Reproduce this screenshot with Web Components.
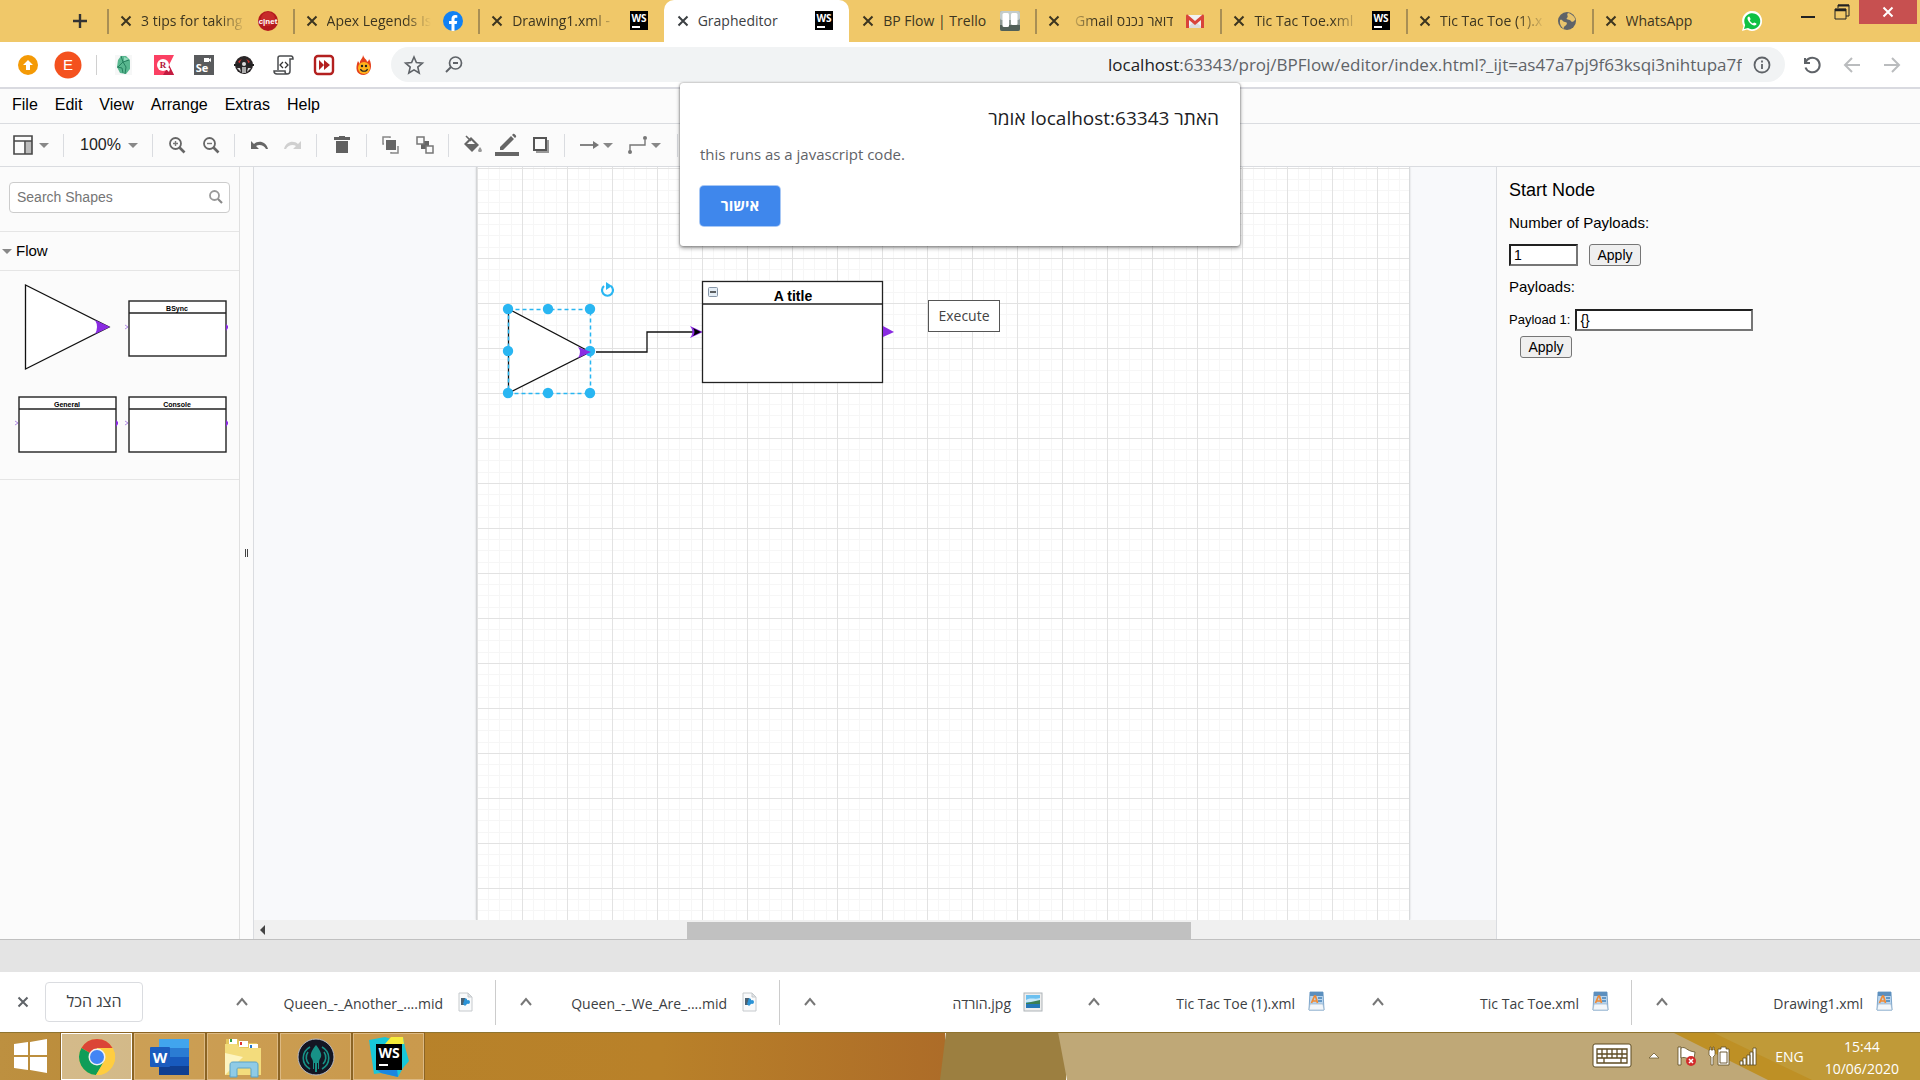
<!DOCTYPE html>
<html lang="en">
<head>
<meta charset="utf-8">
<title>Grapheditor</title>
<style>
  html, body { margin: 0; height: 100%; }
  body { overflow: hidden; font-family: "Open Sans", "Liberation Sans", sans-serif; }
</style>
</head>
<body>
<desk-top></desk-top>
<script>
const ARIAL = '"Liberation Sans", Arial, sans-serif';
const SEGOE = '"Open Sans", "Noto Sans", "Liberation Sans", sans-serif';

function element(name, css, html) {
  const template = document.createElement('template');
  customElements.define(name, class extends HTMLElement {
    constructor() {
      super();
      this.attachShadow({ mode: 'open' });
    }
    connectedCallback() {
      if (this.shadowRoot.childNodes.length) return;
      template.innerHTML = '<style>*{box-sizing:border-box}button,input{font:inherit;color:inherit}' + css + '</style>' + (typeof html === 'function' ? html(this) : html);
      this.shadowRoot.append(template.content.cloneNode(true));
    }
  });
}

/* ---------- icons: [viewBox size, markup] ---------- */
const ICONS = {
  close: [14, '<path d="M2.5 2.5l9 9M11.5 2.5l-9 9" stroke="currentColor" stroke-width="2" fill="none"/>'],
  plus: [16, '<path d="M8 1v14M1 8h14" stroke="currentColor" stroke-width="2.4"/>'],
  cnet: [20, '<circle cx="10" cy="10" r="10" fill="#b4191d"/><circle cx="10" cy="8" r="7" fill="#c72a2a"/><text x="10" y="13" font-family="Liberation Sans" font-weight="700" font-size="8" fill="#fff" text-anchor="middle">c|net</text>'],
  facebook: [20, '<circle cx="10" cy="10" r="10" fill="#1181f4"/><path d="M8.5 20v-7H6v-3h2.5V7.8C8.5 5.3 10 4 12.2 4l2.1.2v2.5h-1.2c-1.2 0-1.6.7-1.6 1.5V10h2.7l-.5 3h-2.2v7z" fill="#fff"/>'],
  ws: [20, '<rect x="1" width="18" height="19" fill="#000"/><text x="10" y="11" font-family="Open Sans" font-weight="700" font-size="10" fill="#fff" text-anchor="middle">WS</text><rect x="3" y="15" width="8" height="2" fill="#fff"/>'],
  trello: [20, '<rect width="20" height="20" rx="2" fill="#8f9a95"/><rect width="20" height="9" rx="2" fill="#c3cccb"/><path d="M0 14h20v4a2 2 0 0 1-2 2H2a2 2 0 0 1-2-2z" fill="#526058"/><rect x="2.5" y="2" width="6.5" height="14" rx="1.5" fill="#fff"/><rect x="11" y="2" width="6.5" height="12" rx="1.5" fill="#fff"/>'],
  gmail: [20, '<path d="M2 4h16v13H2z" fill="#f1f1f1"/><path d="M2 17l8-7 8 7z" fill="#dcdcdc"/><path d="M1 17V5c0-1 1-2 2-1l7 6 7-6c1-1 2 0 2 1v12h-3V9l-6 5-6-5v8z" fill="#d9443a"/>'],
  globe: [20, '<circle cx="10" cy="10" r="9" fill="#5f6368"/><path d="M3 9c3-1 2 2 5 2s2 3 0 4-1 3-1 3-5-3-4-9zM11 2c-2 2 1 3-1 5s3 1 4 3 3 0 4-1-2-6-7-7z" fill="#e9c46d"/>'],
  whatsapp: [20, '<path d="M0 20l1.5-5A10 10 0 1 1 5 18.5z" fill="#fff"/><path d="M2 18l1.2-4A8 8 0 1 1 6 17z" fill="#0fc143"/><path d="M7 5.5c-1 0-1.6 1-1.5 2 .3 3 4 6.8 7 7 1 0 2-.6 2-1.7 0-.4-2-1.5-2.4-1.4-.4 0-.8 1-1.2 1-.8-.1-3-2.2-3.1-3 0-.4.8-.8.8-1.2S7.5 5.5 7 5.5z" fill="#fff"/>'],
  up: [20, '<circle cx="10" cy="10" r="10" fill="#f49a06"/><path d="M10 5l5 5h-3v5H8v-5H5z" fill="#fff"/>'],
  avatar: [28, '<circle cx="14" cy="14" r="13.5" fill="#f4511e"/><text x="14" y="19" font-family="Liberation Sans" font-size="15" fill="#fff" text-anchor="middle">E</text>'],
  gem: [20, '<rect x="1" width="17" height="20" fill="#f6f7f7"/><path d="M7 1h5l4 4v9l-4 5-6-1-3-6 1-7z" fill="#58b78f"/><path d="M7 1l2 6 6-2M9 7l-5 5M9 7l3 5-1 7M3 12l5 1 1 5" fill="none" stroke="#25805f"/><path d="M10 2l5 2-5 2z" fill="#93d9bd"/>'],
  rival: [20, '<path d="M0 0h20l-5 10 5 10H0z" fill="#fb4063"/><path d="M9 20l6-10 5 10z" fill="#c21c41"/><circle cx="9" cy="10" r="6" fill="#fff"/><path d="M11 13l4 4 1-3-3-3z" fill="#fff"/><text x="9" y="13" font-family="Liberation Serif" font-weight="700" font-size="9" fill="#b11238" text-anchor="middle">R</text>'],
  selenium: [20, '<rect width="20" height="20" fill="#595b5d"/><rect x="10" y="3" width="5" height="4" fill="#fff"/><path d="M14 5l3-2v4z" fill="#fff"/><text x="8" y="17" font-family="Open Sans" font-weight="700" font-size="11" fill="#fff" text-anchor="middle">Se</text>'],
  mask: [20, '<circle cx="10" cy="10" r="9" fill="#2a2628"/><path d="M4 7a7 6 0 0 1 12 0l-2 1a4 4 0 0 0-8 0z" fill="#d5312f"/><circle cx="10" cy="9" r="2" fill="#ddd"/><path d="M0 9h7v2H0zM13 9h7v2h-7z" fill="#222"/><path d="M3 13h3l1 4zM14 13h3l-4 4z" fill="#ddd"/><path d="M8 12h4v6H8z" fill="#aaa"/>'],
  scroll: [20, '<path d="M4 15V3c0-1 1-2 2-2h11c1 0 2 1 2 3h-3v12c0 2-1 3-3 3H3c-2 0-3-1-3-3h11c0 2 1 3 2 3" fill="none" stroke="#4a4c4f" stroke-width="1.5"/><path d="M9 7l-3 3 3 3M11 7l3 3-3 3" fill="none" stroke="#333" stroke-width="1.3"/>'],
  forward: [20, '<rect x="1" y="1" width="18" height="18" rx="3" fill="#fff" stroke="#b3201f" stroke-width="2.4"/><path d="M5 5l5 5-5 5zM10 5l6 5-6 5z" fill="#b3201f"/>'],
  fire: [20, '<path d="M9 0c1 4 4 4 4 7 2-1 2-3 2-3 4 6 2 15-5 16C2 20 1 13 4 6c1 2 2 3 2 3-1-4 3-5 3-9z" fill="#e5401c"/><ellipse cx="10" cy="13" rx="6" ry="6" fill="#ffb21c"/><circle cx="8" cy="11" r="1.2" fill="#222"/><circle cx="12" cy="11" r="1.2" fill="#222"/><path d="M6.5 14c1 3 6 3 7 0" fill="none" stroke="#222" stroke-width="1.2"/>'],
  star: [20, '<path d="M10 2l2.4 5.6 6 .5-4.600 4 1.400 5.900L10 14.900 4.800 18l1.400-5.900-4.600-4 6-.5z" fill="none" stroke="#5f6368" stroke-width="1.6"/>'],
  lens: [20, '<circle cx="11.5" cy="8" r="6" fill="none" stroke="#5f6368" stroke-width="1.7"/><path d="M7 12l-5 5M9 8h5" stroke="#5f6368" stroke-width="1.9"/>'],
  info: [18, '<circle cx="9" cy="9" r="7.5" fill="none" stroke="#5f6368" stroke-width="1.8"/><path d="M9 8v5M9 4.5v2" stroke="#5f6368" stroke-width="1.8"/>'],
  reload: [20, '<path d="M3 3v5h5" fill="none" stroke="#5f6368" stroke-width="2"/><path d="M3.5 7.5a7.3 7.3 0 1 1 0 5" fill="none" stroke="#5f6368" stroke-width="2"/>'],
  back: [18, '<path d="M17 9H2M9 2L2 9l7 7" fill="none" stroke="#babcbe" stroke-width="2"/>'],
  ahead: [18, '<path d="M1 9h15M9 2l7 7-7 7" fill="none" stroke="#babcbe" stroke-width="2"/>'],
  minimize: [16, '<path d="M1 13h14" stroke="#222" stroke-width="2"/>'],
  restore: [16, '<path d="M4 4V1h11v11h-3" fill="none" stroke="#222"/><path d="M4 1.5h11" stroke="#222" stroke-width="2"/><path d="M1 5h11v10H1z" fill="none" stroke="#222"/><path d="M1 6h11" stroke="#222" stroke-width="2.5"/>'],
  layout: [20, '<path d="M13 6h6v13h-6z" fill="#bbb"/><path d="M1 1h18v18H1zM1 6h18M12 6v13" fill="none" stroke="#484848" stroke-width="1.6"/>'],
  caret: [10, '<path d="M0 3h10L5 8z" fill="#888"/>'],
  zoomin: [18, '<circle cx="7.5" cy="7.5" r="5.5" fill="none" stroke="#666" stroke-width="1.8"/><path d="M11.5 11.5l5 5" stroke="#666" stroke-width="2.6"/><path d="M5 7.5h5M7.5 5v5" stroke="#777" stroke-width="1.4"/>'],
  zoomout: [18, '<circle cx="7.5" cy="7.5" r="5.5" fill="none" stroke="#666" stroke-width="1.8"/><path d="M11.5 11.5l5 5" stroke="#666" stroke-width="2.6"/><path d="M5 7.5h5" stroke="#777" stroke-width="1.4"/>'],
  undo: [18, '<path d="M1 5v8h8L6 10c3-2 8-1 10 3h2C16 5 8 4 4 8z" fill="#666"/>'],
  redo: [18, '<path d="M17 5v8H9l3-3c-3-2-8-1-10 3H0C2 5 10 4 14 8z" fill="#d0d0d0"/>'],
  trash: [20, '<path d="M7 1h6v1h5v3H2V2h5zM4 6h12v12H4z" fill="#606060"/>'],
  front: [20, '<rect x="5" y="5" width="10" height="10" fill="#666"/><path d="M3 9H2V2h7v1M17 11v7h-7v-1" fill="none" stroke="#888" stroke-width="1.5"/>'],
  behind: [20, '<rect x="6" y="6" width="8" height="8" fill="#666"/><rect x="2" y="2" width="7" height="7" fill="#fbfbfb" stroke="#777" stroke-width="1.5"/><rect x="11" y="11" width="7" height="7" fill="#fbfbfb" stroke="#777" stroke-width="1.5"/>'],
  fill: [20, '<path d="M1 9l7-7 8 8-7 7z" fill="#666"/><path d="M4 9h8L8 5z" fill="#fbfbfb"/><path d="M3 1l5 5" stroke="#666" stroke-width="1.6"/><path d="M17 12c3 4 2 5 0 5s-3-1 0-5z" fill="#999"/>'],
  pen: [24, '<path d="M5 14L16 3l3 3L8 17H5zM17 2l1-1c1-1 4 2 3 3l-1 1z" fill="#666"/><path d="M0 21h24" stroke="#666" stroke-width="4"/>'],
  shadow: [18, '<path d="M4 4h13v13H4z" fill="#999"/><path d="M2 2h12v12H2z" fill="#fbfbfb" stroke="#555" stroke-width="2"/>'],
  arrow: [20, '<path d="M1 10h14" stroke="#777" stroke-width="1.8"/><path d="M14 6l6 4-6 4z" fill="#777"/>'],
  elbow: [20, '<path d="M2 17v-7h15V5" fill="none" stroke="#777" stroke-width="1.4"/><circle cx="2" cy="17" r="2" fill="#777"/><circle cx="17" cy="3" r="2" fill="#777"/>'],
  search: [14, '<circle cx="5.5" cy="5.5" r="4.5" fill="none" stroke="#999" stroke-width="1.8"/><path d="M9 9l4 4" stroke="#888" stroke-width="2.2"/>'],
  chevron: [12, '<path d="M1 9l5-6 5 6" fill="none" stroke="#777" stroke-width="2"/>'],
  mid: [20, '<path d="M4 1h9l4 4v14H4z" fill="#f9fafb" stroke="#c6cacd"/><path d="M13 1v4h4z" fill="#dfe3e6" stroke="#c6cacd"/><rect x="6" y="6" width="4" height="7" fill="#4b6273"/><path d="M10 6l2 1v5l-2 2-2-2z" fill="#2b93d6"/><circle cx="13" cy="10" r="2" fill="#2b93d6"/>'],
  doc: [20, '<path d="M3 0h13l1 18H2z" fill="#b9d5ee" stroke="#7ea6cb"/><rect x="3" y="0" width="13" height="4" fill="#5c8fbe"/><path d="M3 12h13l1 6H2z" fill="#f2f6fa" stroke="#8cabc7" stroke-width=".6"/><path d="M4.500 11L7.500 4h1l2 7M5.500 9h4" fill="none" stroke="#ef8a35" stroke-width="1.7"/><path d="M11 6h4M11 9h4" stroke="#4682b8" stroke-width="1.5"/>'],
  picture: [20, '<rect x="1" y="1" width="18" height="18" fill="#eee" stroke="#aeb4b8"/><rect x="3" y="3" width="14" height="13" fill="#6cc0f0"/><path d="M3 8c5-3 9 0 14-2v4H3z" fill="#c8e9fa"/><path d="M3 11l5-1 9-2v4H3z" fill="#3b7f53"/><path d="M3 12h14v4H3z" fill="#2478b8"/>'],
  windows: [34, '<path d="M0 5l14-2v13H0zM16 3l17-3v16H16zM0 18h14v13L0 29zM16 18h17v16l-17-3z" fill="#fff"/>'],
  chrome: [38, '<circle cx="19" cy="19" r="18" fill="#ffcd40"/><path d="M19 19L3.400 10A18 18 0 0 1 34.600 10H19z" fill="#db4437"/><path d="M3.400 10A18 18 0 0 0 18 37l8-14-7-4z" fill="#0f9d58"/><path d="M19 10h15.600A18 18 0 0 1 18 37l9-14z" fill="#ffcd40"/><circle cx="19" cy="19" r="8.5" fill="#f1f1f1"/><circle cx="19" cy="19" r="7" fill="#4285f4"/>'],
  word: [40, '<rect x="9" y="2" width="30" height="9" fill="#41a5ee"/><rect x="9" y="11" width="30" height="9" fill="#2b7cd3"/><rect x="9" y="20" width="30" height="9" fill="#185abd"/><rect x="9" y="29" width="30" height="9" fill="#103f91"/><rect x="0" y="10" width="20" height="20" rx="1" fill="#1b5cbe"/><text x="10" y="26" font-family="Open Sans" font-weight="700" font-size="15" fill="#fff" text-anchor="middle">W</text>'],
  explorer: [40, '<path d="M3 2h12l2 4h17v31H3z" fill="#e4c75c"/><path d="M6 2h8v6H6zM16 4h9v6h-9zM26 7h9v5h-9z" fill="#fff"/><path d="M7 2h2v3H7z" fill="#2f9e44"/><path d="M17 5h2v3h-2z" fill="#d33"/><path d="M27 8h2v3h-2z" fill="#27c"/><path d="M2 7h12l3 4h21v27H2z" fill="#f3dc7c"/><path d="M2 38L20 20 2 16z" fill="#fdf4c0"/><path d="M7 40V28c0-2 1-3 3-3h22c2 0 3 1 3 3v12h-7v-8c0-1-1-1-2-1H16c-1 0-2 0-2 1v8z" fill="#8fcbe6" stroke="#5ba3c7"/>'],
  kraken: [38, '<circle cx="19" cy="19" r="18" fill="#141623" stroke="#b9bcc4"/><path d="M19 7c4 5 6 9 5 12-1 2-2 3-2 5v7h-1v-6h-1v9h-2v-9h-1v6h-1v-7c0-2-1-3-2-5-1-3 1-7 5-12z" fill="#179287"/><path d="M13 9c-9 5-9 17 0 22M25 9c9 5 9 17 0 22M11 14c-3 4-2 9 1 12M27 14c3 4 2 9-1 12" fill="none" stroke="#179287" stroke-width="1.6"/>'],
  storm: [40, '<path d="M0 3l16-3 6 2 12-2 2 10 4 14-6 7-5 9-17-4-7 1z" fill="#18c7d8"/><path d="M22 0h12l1 7H16z" fill="#f6ec3a"/><path d="M8 33l20-1 1 8-17-4z" fill="#1a86e0"/><rect x="7" y="7" width="26" height="26" fill="#000"/><text x="20" y="21" font-family="Open Sans" font-weight="700" font-size="14" fill="#fff" text-anchor="middle">WS</text><rect x="10" y="27" width="9" height="2" fill="#fff"/>'],
  keyboard: [40, '<rect x="1" y="8" width="38" height="23" rx="2" fill="#fff" stroke="#5d4b22"/><path d="M5 13h30v14H5zM5 18h30M5 22h30M10 13v9M15 13v9M20 13v9M25 13v9M30 13v9M12 22v5M29 22v5" fill="none" stroke="#5d4b22" stroke-width="1.3"/>'],
  tray: [12, '<path d="M1 8l5-5 5 5z" fill="#fff" stroke="#6d5a30" stroke-width=".8"/>'],
  flag: [20, '<path d="M1 1h3v18H1z" fill="#fff" stroke="#5d4b22" stroke-width=".8"/><path d="M4 2c5-2 5 3 14 4l-1 7c-7 1-8-3-13-1z" fill="#fff" stroke="#5d4b22" stroke-width=".8"/><circle cx="14" cy="15" r="5" fill="#d22b2b"/><path d="M12 13l4 4M16 13l-4 4" stroke="#fff" stroke-width="1.5"/>'],
  battery: [20, '<path d="M9 3h3V1h5v2h3v16H9z" fill="#fff" stroke="#5d4b22" stroke-width=".8"/><path d="M11 6h7v11h-7z" fill="none" stroke="#5d4b22" stroke-width=".9"/><path d="M0 4h1V1h1v3h2V1h1v3h1v5L4 11v8H2v-8L0 9z" fill="#fff" stroke="#5d4b22" stroke-width=".7"/>'],
  signal: [18, '<path d="M1 14h3v4H1zM4 11h3v7H4zM8 8h3v10H8zM11 5h3v13h-3zM14 1h3v17h-3z" fill="#fff" stroke="#5d4b22" stroke-width=".8"/>'],
  grip: [8, '<path d="M2.5 0v8M4.5 0v8" stroke="#444" stroke-width="1"/>'],
  left: [10, '<path d="M8 0v10L3 5z" fill="#444"/>']
};

element('ui-icon', ':host{display:block;flex:none}svg{display:block;overflow:visible}', host => {
  const [size, markup] = ICONS[host.getAttribute('name')];
  return `<svg width="${size}" height="${size}" viewBox="0 0 ${size} ${size}" aria-hidden="true">${markup}</svg>`;
});

element('icon-button', `
  :host{display:block;flex:none}
  button{display:flex;align-items:center;justify-content:center;border:0;background:none;padding:0;width:var(--w,40px);height:var(--h,34px)}
`, host => `<button aria-label="${host.getAttribute('name')}"><ui-icon name="${host.getAttribute('name')}"></ui-icon></button>`);

/* ---------- browser chrome ---------- */
element('browser-tab', `
  :host{display:flex;flex:1 1 0;min-width:0;align-items:center;height:42px;padding:0 15px 0 12px;color:#3c3520}
  :host([active]){background:#fff;border-radius:10px 10px 0 0;color:#3c4043}
  :host([divided])::before{content:"";width:2px;height:25px;background:#a98f54;margin-left:-12px;margin-right:10px}
  .title{flex:1;min-width:0;margin:0 12px 0 8px;font:14px/20px ${SEGOE};white-space:nowrap;overflow:hidden}
  :host([fade]) .title{-webkit-mask-image:linear-gradient(to right,#000 75%,transparent);mask-image:linear-gradient(to right,#000 75%,transparent)}
  :host([rtl]) .title{direction:rtl;-webkit-mask-image:linear-gradient(to left,#000 75%,transparent);mask-image:linear-gradient(to left,#000 75%,transparent)}
`, host => `<icon-button name="close" style="--w:14px;--h:14px"></icon-button><span class="title"><slot></slot></span><ui-icon name="${host.getAttribute('icon')}"></ui-icon>`);

element('tab-strip', `
  :host{display:flex;background:#f0c869;height:42px;padding-right:3px;color:#333}
  .new{width:107px;padding:13px 0 0 72px}
  .tabs{display:flex;flex:1;min-width:0}
  .controls{display:flex;width:140px;justify-content:flex-end;align-items:flex-start}
  .close{background:#c75050;color:#fff;width:58px;height:24px}
`, `
  <div class="new"><icon-button name="plus" style="--w:16px;--h:16px"></icon-button></div>
  <div class="tabs">
    <browser-tab divided fade icon="cnet">3 tips for taking</browser-tab>
    <browser-tab divided fade icon="facebook">Apex Legends Is</browser-tab>
    <browser-tab divided fade icon="ws">Drawing1.xml -</browser-tab>
    <browser-tab active icon="ws">Grapheditor</browser-tab>
    <browser-tab icon="trello">BP Flow | Trello</browser-tab>
    <browser-tab divided rtl icon="gmail">דואר נכנס Gmail</browser-tab>
    <browser-tab divided fade icon="ws">Tic Tac Toe.xml</browser-tab>
    <browser-tab divided fade icon="globe">Tic Tac Toe (1).x</browser-tab>
    <browser-tab divided icon="whatsapp">WhatsApp</browser-tab>
  </div>
  <div class="controls">
    <icon-button name="minimize" style="--w:34px;--h:24px"></icon-button>
    <icon-button name="restore" style="--w:34px;--h:24px"></icon-button>
    <div class="close"><icon-button name="close" style="--w:58px;--h:24px"></icon-button></div>
  </div>`);

element('address-bar', `
  :host{display:flex;align-items:center;height:45px;background:#fff;padding:0 8px;color:#5f6368}
  .ext{display:flex;align-items:center;flex:none;width:383px}
  .sep{width:1px;height:20px;background:#d0d0d0;margin:0 7px 0 8px}
  .box{flex:1;min-width:0;display:flex;align-items:center;height:35px;border-radius:18px;background:#f1f3f4;padding:0 3px}
  .url{flex:1;min-width:0;font:17px/24px ${SEGOE};text-align:right;white-space:nowrap;overflow:hidden}
  b{font-weight:400;color:#202124}
  .nav{display:flex;flex:none;margin-left:7px}
`, `
  <div class="ext">
    <icon-button name="up"></icon-button><icon-button name="avatar"></icon-button><span class="sep"></span>
    <icon-button name="gem"></icon-button><icon-button name="rival"></icon-button><icon-button name="selenium"></icon-button><icon-button name="mask"></icon-button><icon-button name="scroll"></icon-button><icon-button name="forward"></icon-button><icon-button name="fire"></icon-button>
  </div>
  <div class="box"><icon-button name="star"></icon-button><icon-button name="lens"></icon-button>
    <span class="url"><b>localhost</b>:63343/proj/BPFlow/editor/index.html?_ijt=as47a7pj9f63ksqi3nihtupa7f</span>
    <icon-button name="info"></icon-button></div>
  <div class="nav"><icon-button name="reload"></icon-button><icon-button name="back"></icon-button><icon-button name="ahead"></icon-button></div>`);

element('alert-dialog', `
  :host{position:absolute;top:83px;left:0;right:0;margin:0 auto;width:560px;z-index:5;background:#fff;border-radius:3px;box-shadow:0 0 2px rgba(0,0,0,.5),0 2px 4px rgba(0,0,0,.4);padding:22px 21px 20px 20px;font-family:${SEGOE}}
  h2{margin:0;font-size:19px;line-height:26px;font-weight:400;color:#202124;direction:rtl}
  p{margin:12px 0 21px;font-size:15px;line-height:22px;color:#5f6368}
  button{display:block;width:80px;height:40px;border:0;border-radius:4px;background:#3f87ec;color:#fff;font-size:15px;font-weight:700;box-shadow:0 0 0 1px #a8c8f5;padding:0 0 2px}
`, `<h2>האתר localhost:63343 אומר</h2><p>this runs as a javascript code.</p><button>אישור</button>`);

/* ---------- editor ---------- */
element('menu-bar', `
  :host{display:flex;align-items:center;gap:17px;height:35px;background:#fbfbfb;border-bottom:1px solid #dadce0;padding:0 12px 2px;font:16px/20px ${ARIAL};color:#000}
  button{border:0;background:none;padding:0}
`, ['File', 'Edit', 'View', 'Arrange', 'Extras', 'Help'].map(t => `<button>${t}</button>`).join(''));

element('tool-bar', `
  :host{display:flex;align-items:center;height:43px;background:#fbfbfb;border-bottom:1px solid #dadce0;padding-left:12px;font:16px/20px ${ARIAL};color:#222}
  i{width:1px;height:23px;background:#dadce0}
  .g{display:flex;align-items:center;justify-content:center}
  .zoom{border:0;background:none;padding:0 0 0 2px;display:flex;align-items:center;gap:7px}
  .lines{width:112px;justify-content:flex-start;padding-left:12px}
`, `
  <div class="g" style="width:51px;justify-content:flex-start"><icon-button name="layout" style="--w:22px"></icon-button><icon-button name="caret" style="--w:20px"></icon-button></div><i></i>
  <div class="g" style="width:88px"><button class="zoom">100%<ui-icon name="caret"></ui-icon></button></div><i></i>
  <div class="g" style="width:81px"><icon-button name="zoomin" style="--w:34px"></icon-button><icon-button name="zoomout" style="--w:34px"></icon-button></div><i></i>
  <div class="g" style="width:81px"><icon-button name="undo" style="--w:34px"></icon-button><icon-button name="redo" style="--w:34px"></icon-button></div><i></i>
  <div class="g" style="width:49px"><icon-button name="trash" style="--w:34px"></icon-button></div><i></i>
  <div class="g" style="width:81px"><icon-button name="front" style="--w:34px"></icon-button><icon-button name="behind" style="--w:34px"></icon-button></div><i></i>
  <div class="g" style="width:115px"><icon-button name="fill" style="--w:34px"></icon-button><icon-button name="pen" style="--w:34px"></icon-button><icon-button name="shadow" style="--w:34px"></icon-button></div><i></i>
  <div class="g lines"><icon-button name="arrow" style="--w:24px"></icon-button><icon-button name="caret" style="--w:14px"></icon-button><icon-button name="elbow" style="--w:20px;margin-left:13px"></icon-button><icon-button name="caret" style="--w:16px"></icon-button></div><i></i>`);

element('shape-tile', `
  :host{display:block;width:110px;height:96px}
  svg{display:block;overflow:visible}
  text{font:bold 7px "Liberation Sans"}
`, host => host.hasAttribute('start')
  ? `<svg width="110" height="96"><path d="M17.5 6v84L101 48z" fill="#fff" stroke="#111" stroke-width="1.3"/><path d="M87 41l15 7-15 7q4-7 0-14z" fill="#8a2be2"/></svg>`
  : `<svg width="110" height="96"><rect x="11" y="22" width="97" height="55" fill="#fff" stroke="#222" stroke-width="1.4"/><path d="M11 34h97" stroke="#222" stroke-width="1.4"/><path d="M7 46l3 2-3 2" fill="none" stroke="#b48be8"/><path d="M108 45l2 2v2l-2 3z" fill="#8a2be2"/><text x="59" y="32" text-anchor="middle">${host.getAttribute('label')}</text></svg>`);

element('shape-panel', `
  :host{display:block;width:240px;flex:none;background:#fbfbfb;border-right:1px solid #e0e0e0;font:15px/20px ${ARIAL};color:#000}
  .find{padding:15px 9px 18px;border-bottom:1px solid #e5e5e5}
  .field{display:flex;align-items:center;height:31px;border:1px solid #ccc;border-radius:4px;background:#fff;padding:0 6px 2px 7px}
  input{flex:1;min-width:0;border:0;outline:0;background:none;font-size:14px;padding:0}
  input::placeholder{color:#757575;opacity:1}
  .head{display:flex;align-items:center;gap:4px;width:100%;height:39px;border:0;border-bottom:1px solid #e5e5e5;background:none;padding:0 2px;text-align:left}
  .grid{display:flex;flex-wrap:wrap;padding:8px;border-bottom:1px solid #e5e5e5}
`, `
  <div class="find"><div class="field"><input type="text" placeholder="Search Shapes" aria-label="Search Shapes"><ui-icon name="search"></ui-icon></div></div>
  <button class="head"><ui-icon name="caret"></ui-icon>Flow</button>
  <div class="grid"><shape-tile start></shape-tile><shape-tile label="BSync"></shape-tile><shape-tile label="General"></shape-tile><shape-tile label="Console"></shape-tile></div>`);

element('graph-canvas', `
  :host{display:flex;flex-direction:column;flex:1;min-width:0;background:#f8f9fb}
  .view{flex:1;display:flex;overflow:hidden;padding:0 86px 0 222px}
  .sheet{flex:1;position:relative;border-left:1px solid #d4d6d8;border-right:1px solid #d8dadc;background-color:#fff;box-shadow:0 0 2px rgba(0,0,0,.15);
    --n:#f6f6f6;--m:#e2e2e2;
    background-image:linear-gradient(to right,var(--m) 1px,transparent 1px),linear-gradient(to bottom,var(--m) 1px,transparent 1px),
      linear-gradient(to right,transparent 11px,var(--n) 11px 12px,transparent 12px 22px,var(--n) 22px 23px,transparent 23px 34px,var(--n) 34px 35px,transparent 35px),
      linear-gradient(to bottom,transparent 11px,var(--n) 11px 12px,transparent 12px 22px,var(--n) 22px 23px,transparent 23px 34px,var(--n) 34px 35px,transparent 35px);
    background-size:45px 45px;background-position:0 1px}
  svg{position:absolute;left:0;top:0;overflow:visible}
  .title{position:absolute;left:226px;top:121px;width:180px;text-align:center;font:bold 14px/16px ${ARIAL}}
  .run{position:absolute;left:451px;top:133px;width:72px;height:32px;border:1px solid #555;background:#fff;color:#444;font:14px/20px ${SEGOE};padding:0 0 1px}
  .bar{display:flex;height:19px;background:#f0f0f0;align-items:center;padding-left:3px}
  .bar ui-icon{margin-right:420px}
  .thumb{width:504px;height:17px;background:#c1c1c1;margin-top:2px}
`, () => {
  const dots = [[31,142],[71,142],[113,142],[31,184],[113,184],[31,226],[71,226],[113,226]];
  return `
  <div class="view"><div class="sheet">
    <svg width="600" height="300">
      <path d="M31.500 142v84L113 185z" fill="#fff" stroke="#111" stroke-width="1.3"/>
      <path d="M119 185h51v-20h50" fill="none" stroke="#111" stroke-width="1.3"/>
      <path d="M213 159l13 6-13 6q5-6 0-12z" fill="#8a2be2"/><path d="M216 161l8 4-8 4q3-4 0-8z" fill="#000"/>
      <rect x="225.500" y="114.500" width="180" height="101" fill="#fff" stroke="#222" stroke-width="1.3"/>
      <path d="M225.500 137h180" stroke="#222" stroke-width="1.3"/>
      <path d="M406 159l11 6-11 5z" fill="#8a2be2"/>
      <rect x="231.500" y="120.500" width="9" height="9" rx="1" fill="#e4edf5" stroke="#8796a8"/><path d="M233 125h6" stroke="#222" stroke-width="1.4"/>
      <rect x="31.500" y="142.500" width="82" height="84" fill="none" stroke="#29b6f2" stroke-width="1.5" stroke-dasharray="4 3"/>
      ${dots.map(([x, y]) => `<circle cx="${x}" cy="${y}" r="5.2" fill="#29b6f2"/>`).join('')}
      <path d="M101 180l13 5-13 6q4-6 0-11z" fill="#8a2be2"/>
      <path d="M127 119a5.500 5.500 0 1 0 7 0" fill="none" stroke="#29b6f2" stroke-width="2.2"/><path d="M129 115l6 4-6 4z" fill="#29b6f2"/>
    </svg>
    <div class="title">A title</div>
    <button class="run">Execute</button>
  </div></div>
  <div class="bar"><ui-icon name="left"></ui-icon><div class="thumb"></div></div>`;
});

element('format-panel', `
  :host{display:block;width:424px;flex:none;background:#fbfbfb;border-left:1px solid #dadce0;padding:12px;font:15px/20px ${ARIAL};color:#000}
  h3{margin:0 0 12px;font-size:18px;line-height:22px;font-weight:400}
  label{display:block}
  .row{display:flex;align-items:center;gap:11px;margin:11px 0}
  .pay{display:flex;align-items:center;gap:5px;margin-top:12px;font-size:13px}
  input{height:22px;border:2px inset #767676;background:#fff;font-size:14px;padding:0 3px;border-radius:0}
  .n{width:69px}.t{width:178px}
  button{width:52px;height:22px;border:1px solid #767676;border-radius:3px;background:#efefef;font-size:14px;line-height:16px;padding:0}
  .last{display:block;margin:5px 0 0 11px}
`, `
  <h3>Start Node</h3>
  <label for="n">Number of Payloads:</label>
  <div class="row"><input id="n" class="n" type="text" value="1"><button>Apply</button></div>
  <div>Payloads:</div>
  <div class="pay"><label for="p">Payload 1:</label><input id="p" class="t" type="text" value="{}"></div>
  <button class="last">Apply</button>`);

element('graph-editor', `
  :host{display:flex;flex-direction:column;flex:1;min-height:0;border-top:2px solid #d9dae0}
  .work{display:flex;flex:1;min-height:0;border-bottom:1px solid #c0c0c0}
  .split{width:14px;flex:none;background:#fbfbfb;border-right:1px solid #dadce0;display:flex;align-items:center;justify-content:center}
  .foot{height:32px;flex:none;background:#e4e4e4}
`, `
  <menu-bar></menu-bar><tool-bar></tool-bar>
  <div class="work"><shape-panel></shape-panel><div class="split"><ui-icon name="grip"></ui-icon></div><graph-canvas></graph-canvas><format-panel></format-panel></div>
  <div class="foot"></div>`);

/* ---------- downloads shelf ---------- */
element('download-item', `
  :host{display:flex;align-items:center;flex:0 1 284px;min-width:0;height:45px;border-right:1px solid transparent;font:14px/20px ${SEGOE};color:#3c4043;padding:0 20px 0 24px}
  :host([line]){border-right-color:#ccc}
  .name{flex:1;text-align:right;margin-right:12px;white-space:nowrap;padding-top:3px}
`, host => `<icon-button name="chevron" style="--w:12px;--h:20px"></icon-button><span class="name"><slot></slot></span><ui-icon name="${host.getAttribute('icon')}"></ui-icon>`);

element('download-shelf', `
  :host{display:flex;align-items:center;height:60px;flex:none;background:#fff;padding-left:15px;color:#5f6368;font:14px/20px ${SEGOE}}
  .all{width:98px;height:40px;flex:none;margin:0 69px 0 15px;border:1px solid #dadce0;border-radius:4px;background:#fff;color:#3c4043;font-size:16px;padding:0 0 3px}
`, `
  <icon-button name="close" style="--w:15px;--h:20px"></icon-button><button class="all">הצג הכל</button>
  <download-item line icon="mid">Queen_-_Another_....mid</download-item>
  <download-item line icon="mid">Queen_-_We_Are_....mid</download-item>
  <download-item icon="picture">הורדה.jpg</download-item>
  <download-item icon="doc">Tic Tac Toe (1).xml</download-item>
  <download-item line icon="doc">Tic Tac Toe.xml</download-item>
  <download-item icon="doc">Drawing1.xml</download-item>`);

/* ---------- taskbar ---------- */
element('task-bar', `
  :host{display:grid;height:48px;flex:none;color:#fff;font:14px/22px ${SEGOE}}
  .art,.row{grid-area:1/1;min-width:0}
  .art{width:100%;height:48px;display:block}
  .row{display:flex;align-items:center;z-index:1}
  .app{width:71px;height:47px;margin:1px 1px 0;flex:none;display:flex;align-items:center;justify-content:center;border:1px solid #dcb983;outline:1px solid #8b6424;background:rgba(230,190,130,.4);padding:0}
  .app.on{border-color:#fff;background:rgba(225,210,180,.65)}
  .start{width:60px;flex:none;border:0;background:none;padding:0 0 0 14px}
  .tray{margin-left:auto;display:flex;align-items:center;padding-right:21px}
  .time{text-align:center;margin-left:21px;padding-top:3px}
  .lang{margin-left:10px;padding-top:2px}
`, `
  <svg class="art" viewBox="0 0 1920 48" preserveAspectRatio="none">
    <defs><linearGradient id="g"><stop offset="0" stop-color="#bd9040"/><stop offset=".4" stop-color="#b7822a"/><stop offset=".7" stop-color="#b98129"/><stop offset="1" stop-color="#ad6c28"/></linearGradient></defs>
    <rect width="945" height="48" fill="url(#g)"/>
    <path d="M946 0h120v48H940z" fill="#9c7f40"/><path d="M1058 0h800v48H1067z" fill="#bfa877"/>
    <path d="M1672 0h248v48H1768z" fill="#be9025"/><path d="M1712 0h208v48H1812z" fill="#c09a38"/>
    <rect width="1920" height="1" fill="#8f7430"/>
  </svg>
  <div class="row">
    <button class="start" aria-label="Start"><ui-icon name="windows"></ui-icon></button>
    <button class="app on" aria-label="Chrome"><ui-icon name="chrome"></ui-icon></button>
    <button class="app" aria-label="Word"><ui-icon name="word"></ui-icon></button>
    <button class="app" aria-label="Explorer"><ui-icon name="explorer"></ui-icon></button>
    <button class="app" aria-label="GitKraken"><ui-icon name="kraken"></ui-icon></button>
    <button class="app" aria-label="WebStorm"><ui-icon name="storm"></ui-icon></button>
    <div class="tray">
      <icon-button name="keyboard" style="--w:58px;--h:40px"></icon-button><icon-button name="tray" style="--w:26px"></icon-button><icon-button name="flag" style="--w:40px"></icon-button><icon-button name="battery" style="--w:24px"></icon-button><icon-button name="signal" style="--w:34px"></icon-button>
      <span class="lang">ENG</span><div class="time">15:44<br>10/06/2020</div>
    </div>
  </div>`);

element('desk-top', ':host{display:flex;flex-direction:column;height:100vh;position:relative;overflow:hidden}',
  '<tab-strip></tab-strip><address-bar></address-bar><graph-editor></graph-editor><download-shelf></download-shelf><task-bar></task-bar><alert-dialog></alert-dialog>');
</script>
</body>
</html>
